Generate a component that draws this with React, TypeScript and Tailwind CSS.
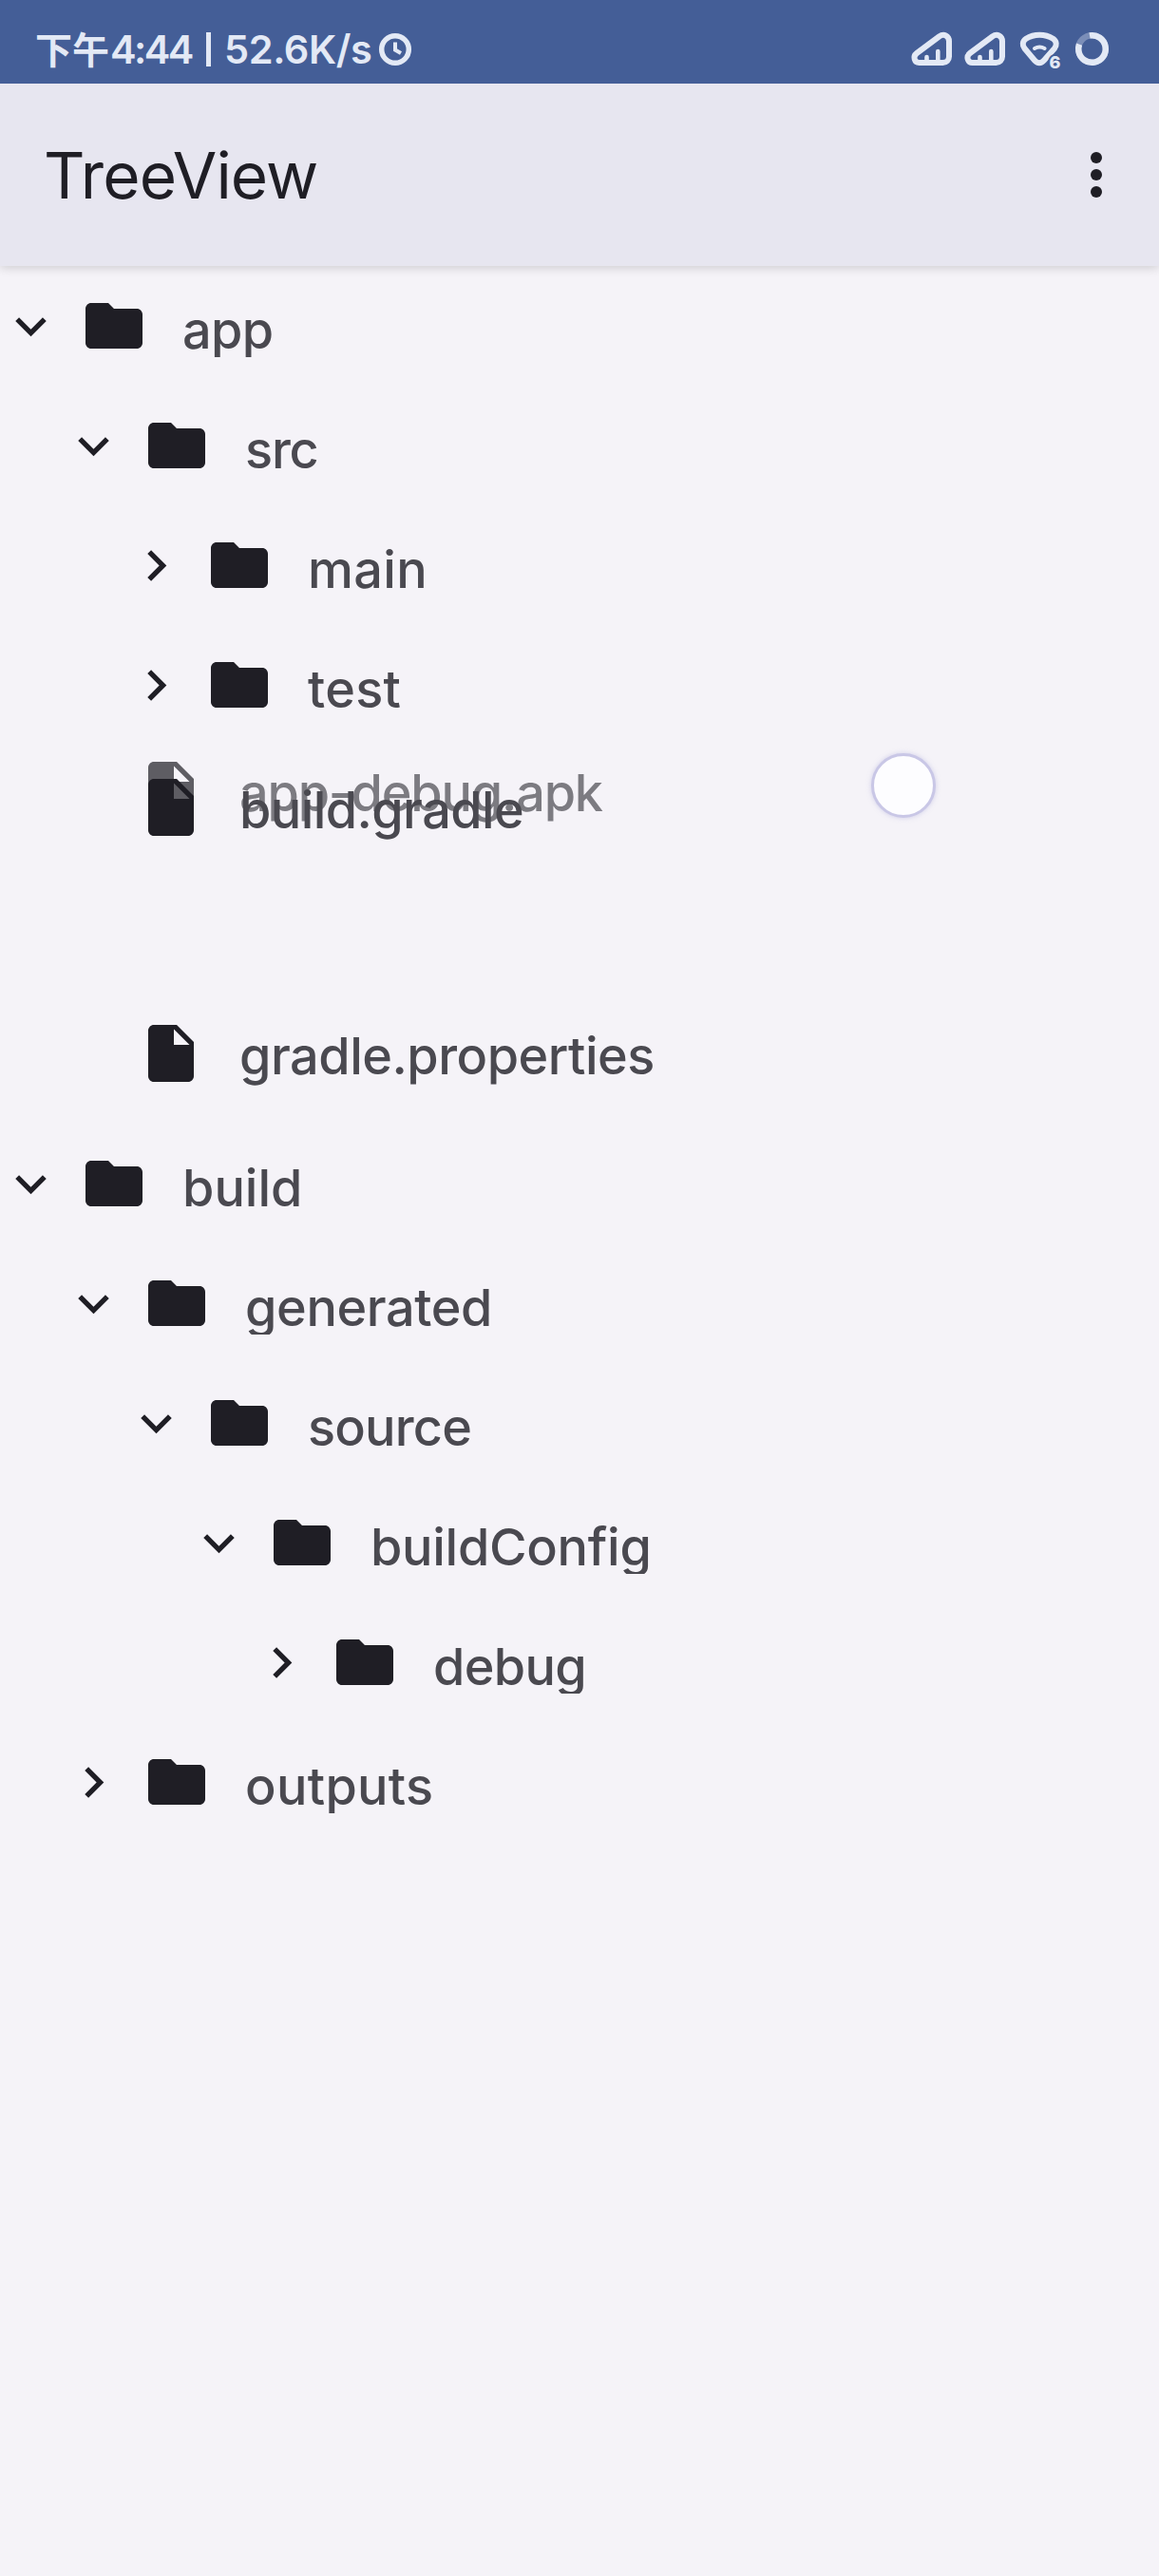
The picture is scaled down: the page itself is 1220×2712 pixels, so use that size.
import React from "react";

type Row = { label: string; depth: number; open: boolean; tracking: string };

const appRows: Row[] = [
  { label: "app", depth: 0, open: true, tracking: "tracking-[-0.6px]" },
  { label: "src", depth: 1, open: true, tracking: "tracking-[-1.2px]" },
  { label: "main", depth: 2, open: false, tracking: "tracking-[0.3px]" },
  { label: "test", depth: 2, open: false, tracking: "tracking-[0.3px]" },
];

const buildRows: Row[] = [
  { label: "build", depth: 0, open: true, tracking: "tracking-normal" },
  { label: "generated", depth: 1, open: true, tracking: "tracking-[-0.4px]" },
  { label: "source", depth: 2, open: true, tracking: "tracking-[-0.8px]" },
  { label: "buildConfig", depth: 3, open: true, tracking: "tracking-[-0.3px]" },
  { label: "debug", depth: 4, open: false, tracking: "tracking-[-0.7px]" },
  { label: "outputs", depth: 1, open: false, tracking: "tracking-[0.3px]" },
];

function FolderRow({ label, depth, open, tracking }: Row) {
  return (
    <div className="flex h-[126px] items-center">
      <div className="shrink-0" style={{ width: depth * 66 }} />
      <svg className="size-[65px] shrink-0" viewBox="0 0 24 24" fill="#1f1e25">
        <path
          d={
            open
              ? "M7.41 8.59 12 13.17l4.59-4.58L18 10l-6 6-6-6z"
              : "M8.59 16.59 13.17 12 8.59 7.41 10 6l6 6-6 6z"
          }
        />
      </svg>
      <svg className="ml-[19px] size-[72px] shrink-0" viewBox="0 0 24 24" fill="#1f1e25">
        <path d="M10 4H4c-1.1 0-2 .9-2 2v12c0 1.1.9 2 2 2h16c1.1 0 2-.9 2-2V8c0-1.1-.9-2-2-2h-8z" />
      </svg>
      <span
        className={
          "ml-[36px] mt-[10px] pr-2 text-[54px] font-medium leading-[76px] text-[#4a4950] [clip-path:inset(0_0_10px_0)] " +
          tracking
        }
      >
        {label}
      </span>
    </div>
  );
}

function FileRow({ label, className }: { label: string; className: string }) {
  return (
    <div className={"flex h-[72px] items-center pl-[144px] " + className}>
      <svg className="size-[72px] shrink-0" viewBox="0 0 24 24" fill="#1f1e25">
        <path d="M6 2c-1.1 0-2 .9-2 2v16c0 1.1.9 2 2 2h12c1.1 0 2-.9 2-2V8l-6-6zm7 7V3.5L18.5 9z" />
      </svg>
      <span className="ml-[36px] mt-[5px] whitespace-nowrap text-[54px] font-medium leading-[68px] text-[#4a4950]">
        {label}
      </span>
    </div>
  );
}

function SignalIcon() {
  return (
    <svg className="h-[44px] w-[46px]" viewBox="38 30 46 44" fill="none" stroke="#e3e9f5" strokeLinecap="round">
      <path
        d="M47.5 66H72.500a6.500 6.500 0 0 0 6.500-6.500V43.500c0-6-5.500-8.500-10.500-5L45 56c-4.500 3.500-2.500 10 2.500 10z"
        strokeWidth="6"
      />
      <path d="M55.500 60v5M67.300 54v11" strokeWidth="4.600" />
    </svg>
  );
}

function StatusBar() {
  return (
    <div className="relative z-10 flex h-[88px] items-start justify-between bg-[#445e97] pl-[37px] pr-[49px] pt-[30px] text-[#e3e9f5]">
      <div className="flex h-[44px] items-center">
        <span className="mb-[4px] w-[79px] whitespace-nowrap font-['Noto_Sans_CJK_SC',sans-serif] text-[39px] font-bold leading-[44px]">
          下午
        </span>
        <span className="w-[101px] whitespace-nowrap text-[41.5px] font-semibold leading-[44px] tracking-[-2.6px]">
          4:44
        </span>
        <span className="h-[36px] w-[5px] bg-[#e3e9f5]" />
        <span className="ml-[14px] w-[161px] whitespace-nowrap text-[41.5px] font-semibold leading-[44px] tracking-[-0.4px]">
          52.6K/s
        </span>
        <svg className="size-[38px]" viewBox="0 0 38 38" fill="none" stroke="#e3e9f5">
          <circle cx="19" cy="19" r="14.300" strokeWidth="5.500" />
          <path d="M19 11.500v8l6 3.500" strokeWidth="4" />
        </svg>
      </div>
      <div className="flex">
        <SignalIcon />
        <div className="w-[10px]" />
        <SignalIcon />
        <div className="w-[10px]" />
        <svg className="h-[44px] w-[50px]" viewBox="150 30 50 44" fill="none" stroke="#e3e9f5">
          <path
            d="M160 40.800C168.500 35.500 180 35.500 188.500 40.800C192.500 43.500 192.500 48 190 51L179 63.500C176 67 172 67 169 63.500L158.500 51C156 48 156 43.500 160 40.800z"
            strokeWidth="6"
          />
          <path d="M169 51q5.300-2.800 10.600 0" strokeWidth="4" strokeLinecap="round" />
          <text
            x="184.500"
            y="71.500"
            fontSize="18"
            fontWeight="800"
            fill="#e3e9f5"
            stroke="#445e97"
            strokeWidth="4"
            paintOrder="stroke"
          >
            6
          </text>
        </svg>
        <div className="w-[9px]" />
        <svg className="h-[44px] w-[42px]" viewBox="0 0 42 44" fill="none" stroke="#e3e9f5" strokeWidth="6.500">
          <circle cx="20.500" cy="21.500" r="14.300" strokeOpacity="0.350" />
          <circle
            cx="20.500"
            cy="21.500"
            r="14.300"
            pathLength="360"
            strokeDasharray="300 60"
            transform="rotate(-100 20.500 21.500)"
          />
        </svg>
      </div>
    </div>
  );
}

export default function App() {
  return (
    <div className="relative h-[2712px] w-[1220px] overflow-hidden bg-[#f5f3f8] font-['Inter','Noto_Sans_CJK_SC',sans-serif]">
      <StatusBar />
      <header className="flex h-[192px] items-center justify-between bg-[#e7e6f0] pl-[46px] pr-[30px] shadow-[0_2px_10px_rgba(0,0,0,0.16)]">
        <h1 className="mt-[2px] text-[67.5px] leading-[80px] tracking-[-0.9px] text-[#1f1e25]">TreeView</h1>
        <svg className="size-[72px]" viewBox="0 0 24 24" fill="#1f1e25">
          <circle cx="12" cy="6" r="2" />
          <circle cx="12" cy="12" r="2" />
          <circle cx="12" cy="18" r="2" />
        </svg>
      </header>
      <main>
        {appRows.map((r) => (
          <FolderRow key={r.label} {...r} />
        ))}
        <div className="relative h-[399px] pt-[289px]">
          <FileRow label="app-debug.apk" className="absolute left-0 top-[12px] tracking-[-1.2px] opacity-70" />
          <FileRow label="build.gradle" className="absolute left-0 top-[30px] tracking-[-0.6px]" />
          <FileRow label="gradle.properties" className="tracking-[-0.5px]" />
        </div>
        {buildRows.map((r) => (
          <FolderRow key={r.label} {...r} />
        ))}
      </main>
      <div className="absolute left-[917px] top-[793px] size-[68px] rounded-full border-[3px] border-[#c9c7e6] bg-[#fdfdff] shadow-[0_0_5px_rgba(170,168,220,0.5)]" />
    </div>
  );
}
